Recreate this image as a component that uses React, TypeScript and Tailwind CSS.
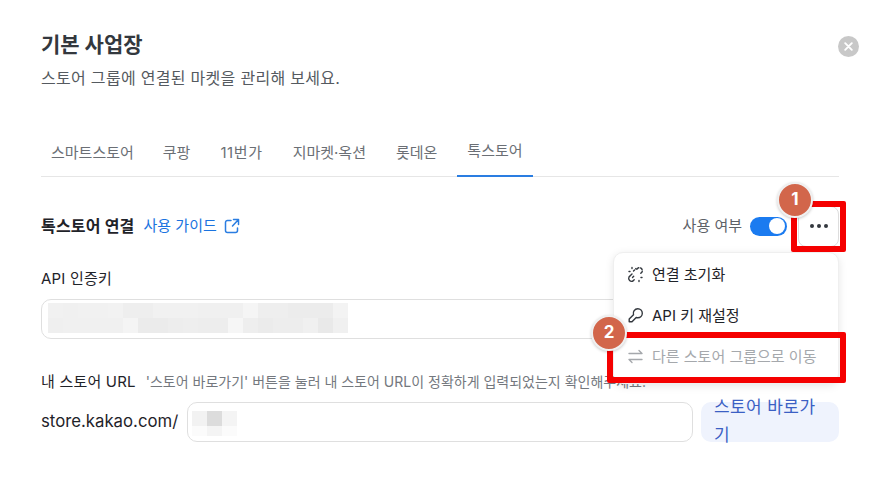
import React from "react";

const row1 = ["bg-[#f1f1f1]","bg-[#f0f0f0]","bg-[#f1f1f1]","bg-[#f1f1f1]","bg-[#f2f2f2]","bg-[#eeeeee]","bg-[#eeeeee]","bg-[#f1f1f1]","bg-[#f1f1f1]","bg-[#f1f1f1]","bg-[#f0f0f0]","bg-[#f0f0f0]","bg-[#f0f0f0]","bg-[#f5f5f5]","bg-[#eeeeee]","bg-[#eeeeee]","bg-[#ececec]","bg-[#ececec]","bg-[#ececec]","bg-[#f3f3f3]"];
const row2 = ["bg-[#efefef]","bg-[#f0f0f0]","bg-[#f0f0f0]","bg-[#f0f0f0]","bg-[#f0f0f0]","bg-[#f4f4f4]","bg-[#ebebeb]","bg-[#ebebeb]","bg-[#ededed]","bg-[#eeeeee]","bg-[#ededed]","bg-[#ededed]","bg-[#f6f6f6]","bg-[#eeeeee]","bg-[#ebebeb]","bg-[#ededed]","bg-[#ededed]","bg-[#f0f0f0]","bg-[#e9e9e9]","bg-[#f0f0f0]"];

function Cells({ cls, h = "h-[15px]" }: { cls: string[]; h?: string }) {
  return (
    <div className="flex">
      {cls.map((c, i) => (
        <div key={i} className={`w-[15px] ${h} ${c}`} />
      ))}
    </div>
  );
}

export default function App() {
  return (
    <div className="relative w-[883px] h-[487px] overflow-hidden bg-white px-[41px] pt-[30px] text-[#1f2329] font-['Inter','Noto_Sans_CJK_KR',sans-serif]">
      {/* header */}
      <h1 className="text-[21px] leading-[30px] font-bold text-[#33383e]">기본 사업장</h1>
      <p className="mt-[6px] text-[16px] leading-[24px] text-[#555a60] tracking-[0.3px]">스토어 그룹에 연결된 마켓을 관리해 보세요.</p>
      <button className="absolute left-[838px] top-[36px] w-[21px] h-[21px] rounded-full bg-[#c8c8c8] flex items-center justify-center">
        <svg width="9" height="9" viewBox="0 0 9 9"><path d="M1.2 1.2 7.8 7.8M7.8 1.2 1.2 7.8" stroke="#fff" strokeWidth="1.9" strokeLinecap="round" /></svg>
      </button>

      {/* tabs */}
      <div className="mt-[42px] w-[798px] h-[45px] flex border-b border-[#e6e6e6] text-[15px] leading-[41px] text-[#6b6f75]">
        <div className="h-[45px] pl-[10px] pr-[14px]">스마트스토어</div>
        <div className="h-[45px] px-[15px]">쿠팡</div>
        <div className="h-[45px] px-[15px] tracking-[0.6px]">11번가</div>
        <div className="h-[45px] px-[15px]">지마켓·옥션</div>
        <div className="h-[45px] px-[15px]">롯데온</div>
        <div className="h-[45px] px-[10px] ml-[5px] leading-[38px] border-b-2 border-[#2a7de1]">톡스토어</div>
      </div>

      {/* connection row */}
      <div className="mt-[33px] w-[798px] h-[32px] flex items-center justify-between">
        <div className="flex items-center">
          <span className="text-[16px] font-bold text-[#1f2329] tracking-[0.2px]">톡스토어 연결</span>
          <a className="ml-[9px] text-[15px] text-[#1a73e0]">사용 가이드</a>
          <svg className="ml-[7px]" width="16" height="16" viewBox="0 0 16 16" fill="none" stroke="#2a7de1" strokeWidth="1.5" strokeLinecap="round" strokeLinejoin="round">
            <path d="M7 2.5H3.5a2 2 0 0 0-2 2v8a2 2 0 0 0 2 2h8a2 2 0 0 0 2-2V10" />
            <path d="M9.5 1.5h5v5M14.5 1.5 8.5 8" />
          </svg>
        </div>
        <div className="flex items-center">
          <span className="text-[15px] text-[#5d6167]">사용 여부</span>
          <div className="ml-[8px] w-[37px] h-[19px] rounded-full bg-[#1b7bf0] flex items-center justify-end pr-[2px]">
            <div className="w-[16px] h-[16px] rounded-full bg-white" />
          </div>
          <div className="ml-[11px] w-[41px] h-[41px] rounded-[8px] border border-[#dddddd] bg-white flex items-center justify-center gap-[3px]">
            <span className="w-[4px] h-[4px] rounded-full bg-[#33383e]" />
            <span className="w-[4px] h-[4px] rounded-full bg-[#33383e]" />
            <span className="w-[4px] h-[4px] rounded-full bg-[#33383e]" />
          </div>
        </div>
      </div>

      {/* API key */}
      <div className="mt-[26px] text-[15px] leading-[22px] text-[#1f2329] tracking-[0.2px]">API 인증키</div>
      <div className="mt-[9px] w-[798px] h-[40px] rounded-[10px] border border-[#dfdfdf] pl-[6px] pt-[3px]">
        <Cells cls={row1} />
        <Cells cls={row2} />
      </div>

      {/* store URL */}
      <div className="mt-[32px] flex items-baseline leading-[22px]">
        <span className="text-[15px] text-[#1f2329] tracking-[0.2px]">내 스토어 URL</span>
        <span className="ml-[10px] text-[14px] text-[#74787e]">'스토어 바로가기' 버튼을 눌러 내 스토어 URL이 정확하게 입력되었는지 확인해주세요.</span>
      </div>
      <div className="mt-[9px] w-[798px] flex items-center">
        <span className="w-[138px] text-[16.75px] text-[#1f2329]">store.kakao.com/</span>
        <div className="ml-[8px] w-[506px] h-[40px] rounded-[10px] border border-[#dfdfdf] pl-[4px] pt-[8px]">
          <Cells cls={["bg-[#f2f2f2]", "bg-[#dcdcdc]", "bg-[#f4f4f4]"]} />
          <Cells h="h-[10px]" cls={["bg-[#fbfbfb]", "bg-[#f4f4f4]", "bg-[#fbfbfb]"]} />
        </div>
        <button className="ml-[8px] w-[138px] h-[40px] flex items-center rounded-[10px] bg-[#eff3fd] pl-[13px] pr-[12px] pb-[2px] text-left text-[17px] leading-[28px] text-[#3b5fc4] tracking-[0.4px]">
          스토어 바로가기
        </button>
      </div>

      {/* dropdown menu */}
      <div className="absolute left-[613px] top-[252px] w-[226px] h-[132px] rounded-[10px] bg-white border border-[#efefef] shadow-[0_2px_8px_rgba(0,0,0,0.1)] text-[15px] pt-[1px]">
        <div className="h-[41px] flex items-center pl-[13px] gap-[8px] text-[#1f2329]">
          <svg width="17" height="17" viewBox="0 0 17 17" fill="none" stroke="#33383e" strokeWidth="1.4" strokeLinecap="round">
            <path d="M9.8 3.2 11 2a3 3 0 0 1 4 4l-1.2 1.2" strokeDasharray="2.5 1.6" />
            <path d="M7.2 13.8 6 15a3 3 0 0 1-4-4l3-3" />
            <path d="M2 5.5h1M5 1.5v1M15 11.5h-1M12 15.5v-1M6.5 5 9 2.5" strokeDasharray="1.5 1.6" />
            <path d="M5.5 11.5l1.2-1.2" />
          </svg>
          <span className="pt-[1px]">연결 초기화</span>
        </div>
        <div className="h-[41px] flex items-center pl-[13px] gap-[8px] text-[#1f2329]">
          <svg width="17" height="17" viewBox="0 0 17 17" fill="none" stroke="#33383e" strokeWidth="1.4" strokeLinecap="round" strokeLinejoin="round">
            <path d="M10.8 1.8a4.5 4.5 0 0 1 0 9 4.6 4.6 0 0 1-1.6-.3L5 14.8H2.2V12l4.3-4.3a4.5 4.5 0 0 1 4.3-5.9Z" />
          </svg>
          <span className="pt-[1px]">API 키 재설정</span>
        </div>
        <div className="h-[41px] flex items-center pl-[13px] gap-[8px] text-[#a5a8ac]">
          <svg width="17" height="17" viewBox="0 0 17 17" fill="none" stroke="#a5a8ac" strokeWidth="1.4" strokeLinecap="round" strokeLinejoin="round">
            <path d="M2 5.5h13M12 2.5l3 3M15 11.5H2M5 14.5l-3-3" />
          </svg>
          <span className="pt-[1px]">다른 스토어 그룹으로 이동</span>
        </div>
      </div>

      {/* annotations */}
      <div className="absolute left-[791px] top-[201px] w-[55px] h-[51px] rounded-[2px] border-[6px] border-[#f50000]" />
      <div className="absolute left-[607px] top-[332px] w-[239px] h-[51px] rounded-[2px] border-[6px] border-[#f50000]" />
      <div className="absolute left-[777px] top-[182px] w-[36px] h-[36px] rounded-full bg-[#d2664b] border-2 border-[#f0f0f0] flex items-center justify-center text-white font-bold text-[17px] shadow-[0_1px_3px_rgba(0,0,0,0.2)]">1</div>
      <div className="absolute left-[591px] top-[315px] w-[36px] h-[36px] rounded-full bg-[#d2664b] border-2 border-[#f0f0f0] flex items-center justify-center text-white font-bold text-[17px] shadow-[0_1px_3px_rgba(0,0,0,0.2)]">2</div>
    </div>
  );
}
